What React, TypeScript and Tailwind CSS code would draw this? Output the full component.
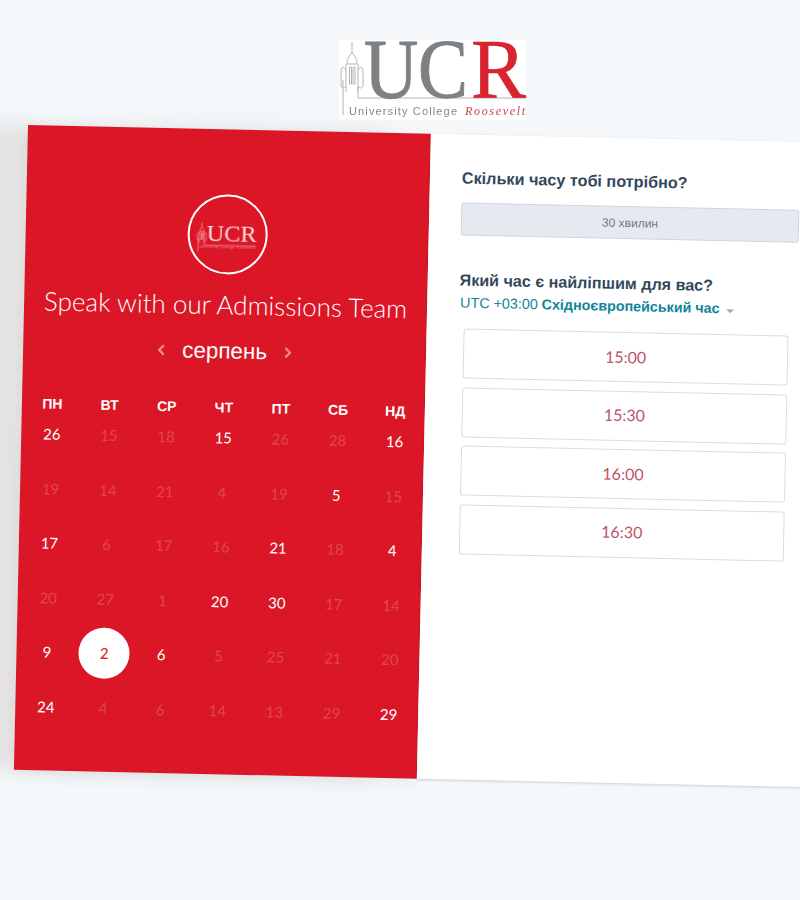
import { ChevronLeft, ChevronRight } from "lucide-react";

// on = bookable day, sel = picked day, the rest are dimmed
const WEEKDAYS = ["ПН", "ВТ", "СР", "ЧТ", "ПТ", "СБ", "НД"];
const DAYS: { n: number; on?: boolean; sel?: boolean }[] = [
  { n: 26, on: true }, { n: 15 }, { n: 18 }, { n: 15, on: true }, { n: 26 }, { n: 28 }, { n: 16, on: true },
  { n: 19 }, { n: 14 }, { n: 21 }, { n: 4 }, { n: 19 }, { n: 5, on: true }, { n: 15 },
  { n: 17, on: true }, { n: 6 }, { n: 17 }, { n: 16 }, { n: 21, on: true }, { n: 18 }, { n: 4, on: true },
  { n: 20 }, { n: 27 }, { n: 1 }, { n: 20, on: true }, { n: 30, on: true }, { n: 17 }, { n: 14 },
  { n: 9, on: true }, { n: 2, sel: true }, { n: 6, on: true }, { n: 5 }, { n: 25 }, { n: 21 }, { n: 20 },
  { n: 24, on: true }, { n: 4 }, { n: 6 }, { n: 14 }, { n: 13 }, { n: 29 }, { n: 29, on: true },
];
const SLOTS = ["15:00", "15:30", "16:00", "16:30"];

const Tower = ({ color, width = 1, lineEnd = 187 }: { color: string; width?: number; lineEnd?: number }) => (
  <g fill="none" stroke={color} strokeWidth={width}>
    <path d="M13 2V12L8 20V24H18V20L13 12" />
    <path d="M7 24V52M19 24V52M7 30Q4 24 2 30V46Q4 50 7 46" />
    <path d="M19 30Q22 24 24 30V46Q22 50 19 46" />
    <path d="M10.5 27V44H12.5V27ZM14 27V44H16V27Z" />
    <path d={`M4 40V75M19 46V58H${lineEnd}`} />
  </g>
);

const MainLogo = () => (
  <div className="h-[80px] w-[187px] bg-white">
    <svg width="187" height="80" viewBox="0 0 187 80" className="block overflow-visible blur-[0.5px]">
      <Tower color="#b4b4b8" />
      <text x="25" y="58" fill="#7f8083" stroke="#7f8083" strokeWidth="1" fontFamily="'Liberation Serif', serif" fontSize="84" textLength="104" lengthAdjust="spacingAndGlyphs">UC</text>
      <text x="132" y="58" fill="#d9232e" stroke="#d9232e" strokeWidth="0.6" fontFamily="'Liberation Serif', serif" fontSize="84" textLength="55" lengthAdjust="spacingAndGlyphs">R</text>
      <text x="10" y="75" fill="#85878a" fontFamily="'Liberation Sans', sans-serif" fontSize="11" textLength="108">University College</text>
      <text x="126" y="75" fill="#c8444e" fontFamily="'Liberation Serif', serif" fontStyle="italic" fontSize="12" textLength="60">Roosevelt</text>
    </svg>
  </div>
);

const BadgeLogo = () => (
  <div className="flex h-[80px] w-[80px] items-center justify-center rounded-full border-[2.5px] border-white">
    <svg width="64" height="34" viewBox="0 0 64 34" className="block overflow-visible blur-[0.3px]">
      <g transform="translate(1 5) scale(0.4)">
        <Tower color="#f08a93" width={2} lineEnd={148} />
      </g>
      <text x="11" y="24" fill="#fbdcdf" fontFamily="'Liberation Serif', serif" fontSize="23" textLength="50" lengthAdjust="spacingAndGlyphs">UCR</text>
      <text x="4" y="31" fill="#f48f98" fontFamily="'Liberation Sans', sans-serif" fontSize="3.5" textLength="56">University College Roosevelt</text>
    </svg>
  </div>
);

export default function App() {
  return (
    <div className="h-[900px] w-[800px] overflow-hidden bg-[#f4f8fb] pt-[40px]">
      <div className="ml-[339px] w-[187px]">
        <MainLogo />
      </div>

      <div className="ml-[28px] mt-[5px] flex h-[645px] w-[840px] origin-top-left rotate-[1.25deg]">
        {/* Calendar side */}
        <div className="flex w-[403px] shrink-0 flex-col items-center bg-[#db1727] pt-[65px] text-white shadow-[-45px_0_20px_rgba(119,73,51,0.12),0_4px_14px_rgba(0,0,0,0.05)]">
          <BadgeLogo />
          <h1 className="mt-[15px] h-[30px] whitespace-nowrap font-['Lato',sans-serif] text-[26px] leading-[30px] font-light">
            Speak with our Admissions Team
          </h1>
          <div className="mt-[18px] flex h-[28px] items-center gap-[13px] font-['Liberation_Sans',sans-serif]">
            <ChevronLeft size={16} strokeWidth={3.5} className="text-[#f08a93]" />
            <span className="text-[22.5px] leading-[28px]">серпень</span>
            <ChevronRight size={16} strokeWidth={3.5} className="text-[#f08a93]" />
          </div>
          <div className="ml-[1px] mt-[36px] grid w-[400px] grid-cols-7 font-['Liberation_Sans',sans-serif] text-[14px] leading-[12px] font-bold">
            {WEEKDAYS.map((d) => (
              <div key={d} className="text-center">{d}</div>
            ))}
          </div>
          <div className="ml-[1px] -mt-[3px] grid w-[400px] grid-cols-7 auto-rows-[54.6px] font-['Lato',sans-serif] text-[15px]">
            {DAYS.map((d, i) => (
              <div key={i} className="flex items-center justify-center">
                {d.sel ? (
                  <span className="flex h-[51px] w-[51px] items-center justify-center rounded-full bg-white text-[#db1727]">{d.n}</span>
                ) : (
                  <span className={d.on ? "text-white" : "text-white/20"}>{d.n}</span>
                )}
              </div>
            ))}
          </div>
        </div>

        {/* Time picker side */}
        <div className="relative flex-1 bg-white pl-[32px] pt-[31.5px] font-['Liberation_Sans',sans-serif] shadow-[0_1px_3px_rgba(0,0,0,0.18)]">
          <h2 className="h-[22px] text-[16.2px] leading-[22px] font-bold text-[#33475b]">Скільки часу тобі потрібно?</h2>
          <div className="mt-[14.5px] flex h-[33px] w-[338px] items-center justify-center rounded-[3px] border border-[#cbd6e2] bg-[#e5eaf0] text-[12px] text-[#6b7a8c]">
            30 хвилин
          </div>
          <h2 className="mt-[32.5px] h-[22px] text-[16.1px] leading-[22px] font-bold text-[#33475b]">Який час є найліпшим для вас?</h2>
          <div className="ml-[1px] mt-[3.5px] flex h-[20px] items-center text-[14.3px] text-[#0f8598]">
            UTC +03:00&nbsp;<b>Східноєвропейський час</b>
            <span className="ml-[7px] mt-[3px] h-0 w-0 border-x-[4px] border-t-[4px] border-x-transparent border-t-[#99acc2]" />
          </div>
          <div className="ml-[5px] mt-[15px] flex w-[325px] flex-col gap-[8.3px]">
            {SLOTS.map((s) => (
              <div key={s} className="flex h-[50.3px] items-center justify-center rounded-[3px] border border-[#d6dde7] pb-[1px] font-['Lato',sans-serif] text-[16px] text-[#bd5566]">
                {s}
              </div>
            ))}
          </div>
        </div>
      </div>
    </div>
  );
}
